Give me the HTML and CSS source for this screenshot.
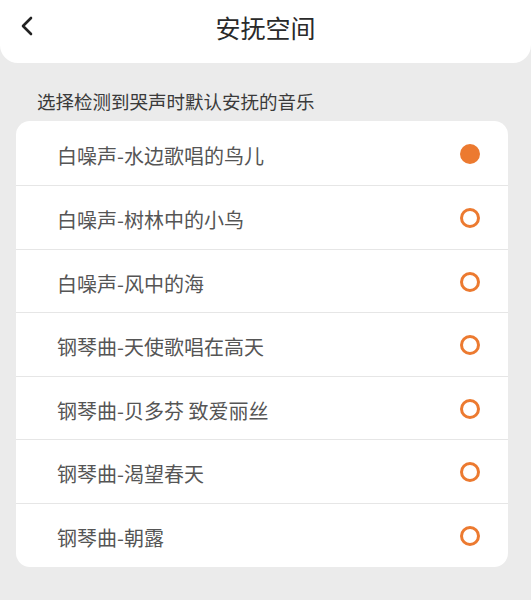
FILE: index.html
```html
<!DOCTYPE html>
<html lang="zh-CN">
<head>
<meta charset="utf-8">
<link rel="stylesheet" href="styles.css">
</head>
<body>
<header class="topbar">
  <div class="back">
    <svg width="14" height="20" viewBox="0 0 14 20"><path d="M11 2 L3 10 L11 18" fill="none" stroke="#222" stroke-width="2.6" stroke-linecap="round" stroke-linejoin="round"/></svg>
  </div>
  <h1 class="title">安抚空间</h1>
  <div></div>
</header>
<p class="hint">选择检测到哭声时默认安抚的音乐</p>
<ul class="card">
  <li class="row"><span>白噪声-水边歌唱的鸟儿</span><i class="radio on"></i></li>
  <li class="row"><span>白噪声-树林中的小鸟</span><i class="radio"></i></li>
  <li class="row"><span>白噪声-风中的海</span><i class="radio"></i></li>
  <li class="row"><span>钢琴曲-天使歌唱在高天</span><i class="radio"></i></li>
  <li class="row"><span>钢琴曲-贝多芬 致爱丽丝</span><i class="radio"></i></li>
  <li class="row"><span>钢琴曲-渴望春天</span><i class="radio"></i></li>
  <li class="row"><span>钢琴曲-朝露</span><i class="radio"></i></li>
</ul>
</body>
</html>
```
FILE: styles.css
```css
html, body {
  margin: 0;
  padding: 0;
  background: #ebebeb;
  font-family: "Noto Sans CJK SC", "Noto Sans", sans-serif;
}
.topbar {
  height: 63px;
  background: #fff;
  border-radius: 0 0 18px 18px;
  display: grid;
  grid-template-columns: 60px 1fr 60px;
  align-items: start;
}
.back {
  display: flex;
  padding: 16px 0 0 20px;
}
.title {
  margin: 10px 0 0;
  text-align: center;
  font-size: 25px;
  font-weight: 400;
  color: #2a2a2a;
  line-height: 34px;
}
.hint {
  margin: 0;
  padding: 25px 0 0 37px;
  font-size: 18.5px;
  line-height: 26px;
  color: #3a3a3a;
}
.card {
  list-style: none;
  margin: 7px 23px 0 16px;
  padding: 0;
  background: #fff;
  border-radius: 14px;
}
.row {
  height: 63.5px;
  display: flex;
  align-items: center;
  justify-content: space-between;
  padding: 5px 28px 0 41px;
  box-sizing: border-box;
  font-size: 20px;
  color: #555;
  border-bottom: 1px solid #e6e6e6;
}
.row:first-child {
  height: 65px;
}
.row:last-child {
  border-bottom: none;
}
.radio {
  width: 20px;
  height: 20px;
  box-sizing: border-box;
  border-radius: 50%;
  border: 3px solid #ec7a30;
  margin-top: -3px;
}
.radio.on {
  background: #ec7a30;
}
```
